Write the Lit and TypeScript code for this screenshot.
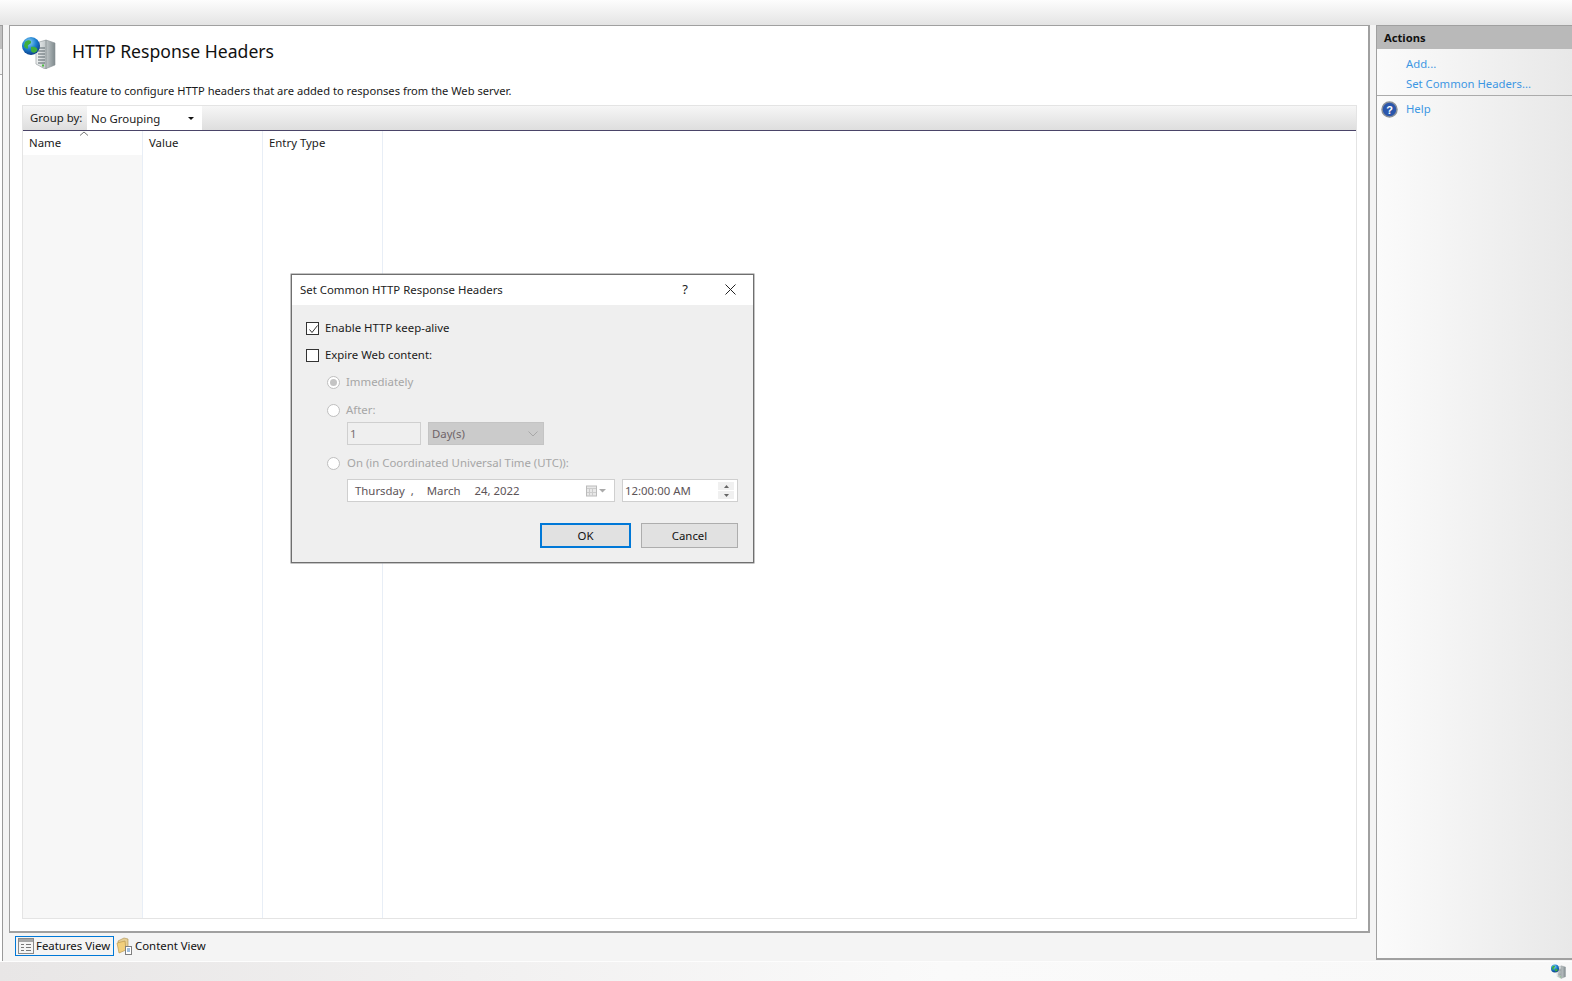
import { LitElement, html, css, svg } from "lit";
import { customElement } from "lit/decorators.js";

const serverIcon = (w: number, h: number) => html`<svg width=${w} height=${h} viewBox="0 0 34 32">
  <defs>
    <radialGradient id="glb" cx="40%" cy="30%" r="70%"><stop offset="0" stop-color="#8fd4f5"/><stop offset=".55" stop-color="#1c7fd0"/><stop offset="1" stop-color="#0b3f8a"/></radialGradient>
    <linearGradient id="srv" x1="0" x2="1"><stop offset="0" stop-color="#f2f4f4"/><stop offset=".5" stop-color="#c3c9cb"/><stop offset="1" stop-color="#7f8a8d"/></linearGradient>
  </defs>
  <path d="M14 6 L24 3 L33 6 L33 28 L23 32 L14 27 Z" fill="url(#srv)" stroke="#8a9295" stroke-width=".6"/>
  <path d="M24 3 L24 32" stroke="#6c7679" stroke-width=".6"/>
  <path d="M16 11h7M16 14h7M16 17h7M16 20h7M16 23h7M16 26h7" stroke="#59646a" stroke-width="1"/>
  <rect x="20" y="27.500" width="2" height="2" fill="#4dbb3f"/>
  <circle cx="9" cy="9" r="9" fill="url(#glb)"/>
  <path d="M3 5 C6 2 10 3 9 6 C8 8 5 7 6 10 C7 13 3 12 2 9 Z M9 10 C12 9 17 11 15 14 C13 17 9 16 9 13 Z" fill="#3fae3c"/>
</svg>`;

const check = svg`<path d="M2.500 6.500 L5 9.500 L10.500 2.500" fill="none" stroke="#333" stroke-width="1"/>`;

@customElement("app-root")
export class AppRoot extends LitElement {
  static styles = css`
    :host { display: block; position: relative; width: 1572px; height: 981px; overflow: hidden;
      font-family: "Noto Sans", "Open Sans", sans-serif; font-size: 11.400px; color: #1a1a1a; background: #f4f4f4; }
    .app { display: flex; flex-direction: column; height: 981px; }
    .top { height: 25px; flex: none; background: linear-gradient(#fdfdfd, #e4e4e4); }
    .mid { flex: 1; min-height: 0; display: flex; }
    .sliver { width: 3px; flex: none; border-right: 1px solid #9a9a9a; border-top: 1px solid #9a9a9a; box-sizing: border-box; background: #fff; }
    .sliver .cap { height: 23px; background: #c0c0c0; }
    .sliver .rest { height: 25px; background: #f4f4f4; border-bottom: 1px solid #a8a8a8; }
    .center { margin-left: 6px; width: 1361px; flex: none; display: flex; flex-direction: column; }
    .panel { height: 908px; box-sizing: border-box; border: 2px solid #a0a0a0; border-width: 1px 2px 2px 1px; background: #fff;
      display: flex; flex-direction: column; padding: 0 11px 12px 12px; flex: none; }
    .head { display: flex; align-items: center; height: 49px; flex: none; }
    .head svg { flex: none; margin-top: 4px; }
    .head h1 { margin: 0 0 0 16px; font-size: 17.600px; font-weight: 400; color: #111; white-space: nowrap; }
    .desc { height: 30px; padding-left: 3px; line-height: 31px; flex: none; font-size: 11.150px; white-space: nowrap; }
    .list { flex: 1; min-height: 0; display: flex; flex-direction: column; border: 1px solid #e4e4e4; }
    .groupbar { height: 25px; box-sizing: border-box; flex: none; display: flex; background: linear-gradient(#f6f6f6, #dedede); border-bottom: 1px solid #4a4468; }
    .groupbar .lbl { padding: 0 0 0 7px; width: 57px; line-height: 23px; white-space: nowrap; }
    .groupsel { width: 115px; height: 24px; background: #fff; display: flex; align-items: center; justify-content: space-between; padding: 0 8px 0 4px; box-sizing: border-box; }
    .caret { width: 0; height: 0; border: 3px solid transparent; border-top: 3px solid #111; border-bottom: 0; }
    .cols { flex: 1; min-height: 0; display: flex; }
    .col { width: 120px; box-sizing: border-box; border-right: 1px solid #e8eef6; display: flex; flex-direction: column; position: relative; }
    .col .h { height: 24px; line-height: 23px; padding-left: 6px; flex: none; }
    .col .b { flex: 1; }
    .col.first .b { background: #f7f7f7; }
    .sort { position: absolute; left: 56px; top: 0; }
    .tabs { flex: 1; display: flex; align-items: flex-start; padding: 3px 0 0 6px; gap: 2px; }
    .tab { display: flex; align-items: center; height: 20px; box-sizing: border-box; gap: 3px; color: #111; white-space: nowrap; }
    .tab span { margin-top: -2px; }
    .tab.on { border: 1px solid #0078d7; width: 99px; padding-left: 2px; gap: 2px; }
    .actions { margin: 0 0 1px 6px; width: 197px; flex: none; box-sizing: border-box; border: 2px solid #a0a0a0; border-width: 1px 0 2px 1px;
      background: linear-gradient(90deg, #fbfbfb, #e8e8e8); display: flex; flex-direction: column; }
    .a-head { height: 23px; line-height: 23px; background: #b9b9b9; font-weight: 700; padding-left: 7px; color: #111; font-size: 11.200px; flex: none; }
    .a-links { display: flex; flex-direction: column; box-sizing: border-box; padding: 5px 0 0 29px; border-bottom: 1px solid #ababab; height: 47px; flex: none; }
    .link { color: #3d97e3; height: 20px; line-height: 20px; white-space: nowrap; font-size: 11.300px; }
    .a-help { display: flex; align-items: center; gap: 8px; padding: 3px 0 0 4px; }
    .status { height: 20px; flex: none; background: linear-gradient(90deg, #e8e6e6, #fafafa 60%, #f8f8f8); display: flex; justify-content: flex-end; align-items: center; padding-right: 6px; border-top: 1px solid #fdfdfd; box-sizing: border-box; }

    .dlg { position: absolute; left: 291px; top: 274px; width: 463px; height: 289px; box-sizing: border-box; border: 1px solid #6f6f6f; background: #efefef;
      display: flex; flex-direction: column; box-shadow: 0 0 0 .5px #8a8a8a; }
    .d-title { height: 30px; box-sizing: border-box; padding-bottom: 2px; flex: none; background: #fff; display: flex; align-items: center; padding-left: 8px; color: #222; }
    .d-title .t { flex: 1; }
    .d-title .q { width: 20px; font-size: 13px; color: #222; margin-right: 30px; text-align: center; }
    .d-title svg { margin-right: 17px; }
    .d-body { flex: 1; display: flex; flex-direction: column; padding: 17px 15px 12px 14px; }
    .row { display: flex; align-items: center; gap: 6px; height: 13px; }
    .row + .row { margin-top: 14px; }
    .row .lab, .rad .lab { margin-top: -2px; }
    .box { width: 13px; height: 13px; box-sizing: border-box; border: 1px solid #333; background: #fff; flex: none; display: block; }
    .sub { display: flex; flex-direction: column; padding-left: 21px; color: #a6a6a6; margin-top: 14px; }
    .rad { display: flex; align-items: center; gap: 6px; height: 13px; }
    .circle { width: 13px; height: 13px; box-sizing: border-box; border-radius: 50%; border: 1px solid #bfbfbf; background: #fff; flex: none; display: flex; align-items: center; justify-content: center; }
    .circle i { width: 7px; height: 7px; border-radius: 50%; background: #c4c4c4; display: block; }
    .m1 { margin-top: 15px; }
    .m2 { margin-top: 12px; gap: 7px; }
    .inputs { display: flex; padding-left: 20px; margin-top: 5px; }
    .txt { width: 74px; height: 23px; box-sizing: border-box; border: 1px solid #cfcfcf; background: #efefef; color: #7a6f72; padding-left: 2px; line-height: 21px; }
    .combo { margin-left: 7px; width: 116px; height: 23px; box-sizing: border-box; background: #cbcbcb; color: #6f6468; display: flex; align-items: center; justify-content: space-between; padding: 0 5px 0 3px; border: 1px solid #c4c4c4; }
    .dates { display: flex; padding-left: 20px; margin-top: 9px; gap: 7px; }
    .date { width: 268px; height: 23px; box-sizing: border-box; border: 1px solid #cfcfcf; background: #fff; color: #5d5458; display: flex; align-items: center; padding-left: 7px; }
    .date span { white-space: pre; }
    .date .sp { flex: 1; }
    .time { width: 116px; height: 23px; box-sizing: border-box; border: 1px solid #cfcfcf; background: #fff; color: #5d5458; display: flex; align-items: center; justify-content: space-between; padding: 0 3px 0 2px; }
    .spin { display: flex; flex-direction: column; gap: 1px; width: 16px; }
    .spin b { display: flex; height: 8px; background: #f0f0f0; align-items: center; justify-content: center; }
    .btns { display: flex; justify-content: flex-end; gap: 10px; margin-top: 21px; }
    .btn { height: 25px; box-sizing: border-box; background: #e1e1e1; border: 1px solid #adadad; display: flex; align-items: center; justify-content: center; color: #111; }
    .ok { width: 91px; border: 2px solid #0078d7; }
    .cancel { width: 97px; }
    .mar { margin-left: 13px; }
    .day { margin-left: 14px; }
  `;

  render() {
    return html`
      <div class="app">
        <div class="top"></div>
        <div class="mid">
          <div class="sliver"><div class="cap"></div><div class="rest"></div></div>
          <div class="center">
            <div class="panel">
              <div class="head">${serverIcon(34, 32)}<h1>HTTP Response Headers</h1></div>
              <div class="desc">Use this feature to configure HTTP headers that are added to responses from the Web server.</div>
              <div class="list">
                <div class="groupbar">
                  <div class="lbl">Group by:</div>
                  <div class="groupsel"><span>No Grouping</span><span class="caret"></span></div>
                </div>
                <div class="cols">
                  <div class="col first">
                    <svg class="sort" width="10" height="5" viewBox="0 0 10 5"><path d="M1 4.500 L5 1 L9 4.500" fill="none" stroke="#777"/></svg>
                    <div class="h">Name</div><div class="b"></div>
                  </div>
                  <div class="col"><div class="h">Value</div><div class="b"></div></div>
                  <div class="col"><div class="h">Entry Type</div><div class="b"></div></div>
                </div>
              </div>
            </div>
            <div class="tabs">
              <div class="tab on">
                <svg width="16" height="16" viewBox="0 0 16 16"><rect x=".5" y=".5" width="15" height="15" fill="#f4f4f4" stroke="#8a8a8a"/><rect x="1" y="1" width="14" height="3" fill="#a6a6a6"/><path d="M3 6.500h3M8 6.500h5M3 9.500h3M8 9.500h5M3 12.500h3M8 12.500h5" stroke="#777"/></svg>
                <span>Features View</span>
              </div>
              <div class="tab">
                <svg width="16" height="18" viewBox="0 0 16 18"><path d="M2 4 L8 1 L12 2 L12 10 L4 14 Z" fill="#e6cf96" stroke="#a98d4f" stroke-width=".6"/><path d="M1 6 L9 4 L10 13 L3 16 Z" fill="#f1cf7c" stroke="#b08f45" stroke-width=".6"/><rect x="9.500" y="9.500" width="6" height="8" fill="#fff" stroke="#7f7f7f"/><path d="M11 12h3M11 14h3" stroke="#3f7fc0"/></svg>
                <span>Content View</span>
              </div>
            </div>
          </div>
          <div class="actions">
            <div class="a-head">Actions</div>
            <div class="a-links"><span class="link">Add...</span><span class="link">Set Common Headers...</span></div>
            <div class="a-help">
              <svg width="17" height="17" viewBox="0 0 17 17"><circle cx="8.500" cy="8.500" r="7.500" fill="#2a56ac" stroke="#8a9098" stroke-width="1.500"/><text x="8.500" y="12.500" text-anchor="middle" font-size="11" font-weight="700" fill="#fff" font-family="Liberation Sans">?</text></svg>
              <span class="link">Help</span>
            </div>
          </div>
        </div>
        <div class="status">${serverIcon(15, 15)}</div>
      </div>

      <div class="dlg">
        <div class="d-title">
          <span class="t">Set Common HTTP Response Headers</span>
          <span class="q">?</span>
          <svg width="11" height="11" viewBox="0 0 11 11"><path d="M.5 .5 L10.500 10.500 M10.500 .5 L.5 10.500" stroke="#222" fill="none"/></svg>
        </div>
        <div class="d-body">
          <div class="row"><svg class="box" viewBox="0 0 11 11" style="overflow:visible">${check}</svg><span class="lab">Enable HTTP keep-alive</span></div>
          <div class="row"><span class="box"></span><span class="lab">Expire Web content:</span></div>
          <div class="sub">
            <div class="rad"><span class="circle"><i></i></span><span class="lab">Immediately</span></div>
            <div class="rad m1"><span class="circle"></span><span class="lab">After:</span></div>
            <div class="inputs">
              <div class="txt">1</div>
              <div class="combo"><span>Day(s)</span><svg width="10" height="6" viewBox="0 0 10 6"><path d="M.5 .5 L5 5 L9.500 .5" fill="none" stroke="#a8a8a8"/></svg></div>
            </div>
            <div class="rad m2"><span class="circle"></span><span class="lab">On (in Coordinated Universal Time (UTC)):</span></div>
            <div class="dates">
              <div class="date">
                <span>Thursday  ,</span><span class="mar">March</span><span class="day">24, 2022</span><span class="sp"></span>
                <svg width="24" height="12" viewBox="0 0 24 12" style="margin-right:4px"><rect x=".5" y="1" width="10" height="10" fill="#e8e8e8" stroke="#bbb"/><path d="M1 3.500h9M3.500 4v7M6.500 4v7M1 7.500h9" stroke="#ccc"/><path d="M13 4h7l-3.500 3.500z" fill="#aaa"/></svg>
              </div>
              <div class="time">
                <span>12:00:00 AM</span>
                <div class="spin">
                  <b><svg width="5" height="3" viewBox="0 0 5 3"><path d="M2.500 0 L5 3 H0 Z" fill="#666"/></svg></b>
                  <b><svg width="5" height="3" viewBox="0 0 5 3"><path d="M0 0 H5 L2.500 3 Z" fill="#666"/></svg></b>
                </div>
              </div>
            </div>
          </div>
          <div class="btns"><div class="btn ok">OK</div><div class="btn cancel">Cancel</div></div>
        </div>
      </div>
    `;
  }
}
